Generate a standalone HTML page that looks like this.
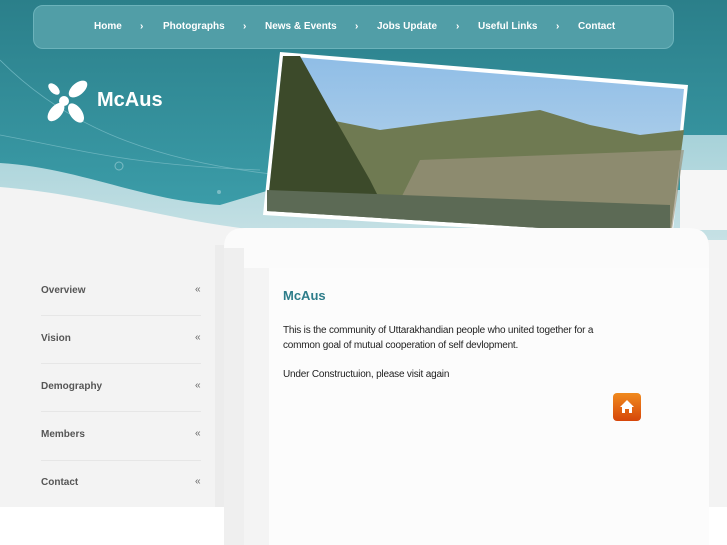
<!DOCTYPE html>
<html><head><meta charset="utf-8"><style>
*{margin:0;padding:0}
body{width:727px;height:545px;overflow:hidden;background:#fff;font-family:"Liberation Sans",Arial,sans-serif;position:relative}
.abs{position:absolute}
#nav{left:33px;top:5px;width:641px;height:44px;border-radius:10px;background:#519ea7;border:1px solid #6cb3bb;box-sizing:border-box}
#nav span{position:absolute;top:15px;color:#fff;font-size:10px;font-weight:bold}
#nav i{position:absolute;top:15px;color:#fff;font-size:10px;font-style:normal;font-weight:bold}
.side{position:absolute;left:41px;font-size:10px;font-weight:bold;color:#555}
.arr{position:absolute;left:195px;font-size:10px;color:#666}
.ln{position:absolute;left:41px;width:160px;height:1px;background:#e6e6e6}
</style></head><body>
<svg class="abs" style="left:0;top:0" width="727" height="545">
<defs>
<linearGradient id="tg" x1="0" y1="0" x2="0" y2="1"><stop offset="0" stop-color="#2b7f8a"/><stop offset="1" stop-color="#3b9ca8"/></linearGradient>
<linearGradient id="sky" x1="0" y1="0" x2="0" y2="1"><stop offset="0" stop-color="#8fbde6"/><stop offset="1" stop-color="#c4dcee"/></linearGradient>
<linearGradient id="lb" x1="0" y1="0" x2="0" y2="1"><stop offset="0" stop-color="#7fbfca"/><stop offset="1" stop-color="#c6e1e5"/></linearGradient>
</defs>
<rect width="727" height="507" fill="#f3f3f3"/>
<path d="M0 0H727V240H0Z" fill="url(#lb)"/>
<path d="M0 0H727V135H680V190H270 L220 205 C140 200 80 168 0 163Z" fill="url(#tg)"/>
<path d="M0 187 C100 195 180 225 280 232 L280 260 L0 260Z" fill="#f3f3f3"/>
<path d="M680 170 H727 V230 H680Z" fill="#f6f6f6"/>
<path d="M0 60 C60 120 140 160 280 175" stroke="#6ab3bd" fill="none" stroke-width="0.8"/>
<path d="M0 135 C80 150 130 165 260 170" stroke="#6ab3bd" fill="none" stroke-width="0.8"/>
<circle cx="119" cy="166" r="4" fill="none" stroke="#7cbcc5"/>
<circle cx="219" cy="192" r="2" fill="#7cbcc5"/>
<polygon points="280,52 688,85 672,240 263,215" fill="#fff"/>
<polygon points="283,56 684,89 670,236 267,211" fill="url(#sky)"/>
<path d="M283 100 L330 120 380 130 440 122 500 115 540 110 590 125 640 135 684 130 L670 236 267 211Z" fill="#6f7a52"/>
<path d="M283 56 L300 56 330 110 370 180 380 200 267 211Z" fill="#3c4a2a"/>
<path d="M420 160 L684 150 L672 230 L400 200Z" fill="#9a937c" opacity="0.7"/>
<path d="M267 190 L670 205 L670 236 L267 211Z" fill="#5c6a55"/>
<path d="M224 248 Q224 228 244 228 H689 Q709 228 709 248 V507 H224Z" fill="#fbfbfb"/>
<rect x="215" y="245" width="9" height="262" fill="#ececec"/>
<rect x="224" y="248" width="20" height="297" fill="#efefef"/>
<rect x="244" y="268" width="25" height="277" fill="#f4f4f4"/>
<rect x="269" y="268" width="440" height="277" fill="#fcfcfc"/>
<rect x="709" y="245" width="18" height="262" fill="#f3f3f3"/>
</svg>
<div id="nav" class="abs">
<span style="left:60px">Home</span><i style="left:106px">›</i>
<span style="left:129px">Photographs</span><i style="left:209px">›</i>
<span style="left:231px">News &amp; Events</span><i style="left:321px">›</i>
<span style="left:343px">Jobs Update</span><i style="left:422px">›</i>
<span style="left:444px">Useful Links</span><i style="left:522px">›</i>
<span style="left:544px">Contact</span>
</div>
<svg class="abs" style="left:44px;top:79px" width="46" height="46" viewBox="0 0 46 46">
<g fill="#fff">
<ellipse cx="34" cy="10" rx="11" ry="6" transform="rotate(-40 34 10)"/>
<ellipse cx="12" cy="33" rx="11" ry="6" transform="rotate(-50 12 33)"/>
<ellipse cx="32" cy="34" rx="11" ry="6" transform="rotate(55 32 34)"/>
<ellipse cx="10" cy="10" rx="7" ry="4" transform="rotate(45 10 10)"/>
<circle cx="20" cy="22" r="5"/>
</g></svg>
<div class="abs" style="left:97px;top:89px;color:#fff;font-size:20px;font-weight:bold">McAus</div>
<div class="side" style="top:285px">Overview</div><div class="arr" style="top:284px">«</div><div class="ln" style="top:315px"></div>
<div class="side" style="top:333px">Vision</div><div class="arr" style="top:332px">«</div><div class="ln" style="top:363px"></div>
<div class="side" style="top:381px">Demography</div><div class="arr" style="top:380px">«</div><div class="ln" style="top:411px"></div>
<div class="side" style="top:429px">Members</div><div class="arr" style="top:428px">«</div><div class="ln" style="top:460px"></div>
<div class="side" style="top:477px">Contact</div><div class="arr" style="top:476px">«</div>
<div class="abs" style="left:283px;top:288px;color:#2e7d8a;font-size:13px;font-weight:bold">McAus</div>
<div class="abs" style="left:283px;top:324px;width:330px;color:#222;font-size:10px;line-height:14.5px;letter-spacing:-0.2px">This is the community of Uttarakhandian people who united together for a common goal of mutual cooperation of self devlopment.<br><br>Under Constructuion, please visit again</div>
<div class="abs" style="left:613px;top:393px;width:28px;height:28px;border-radius:4px;background:linear-gradient(#f08a1e,#d6460a)"></div>
<svg class="abs" style="left:613px;top:393px" width="28" height="28"><path d="M14 7 L21 14 H19 V20 H16 V16 H12 V20 H9 V14 H7Z" fill="#fff"/></svg>
</body></html>
